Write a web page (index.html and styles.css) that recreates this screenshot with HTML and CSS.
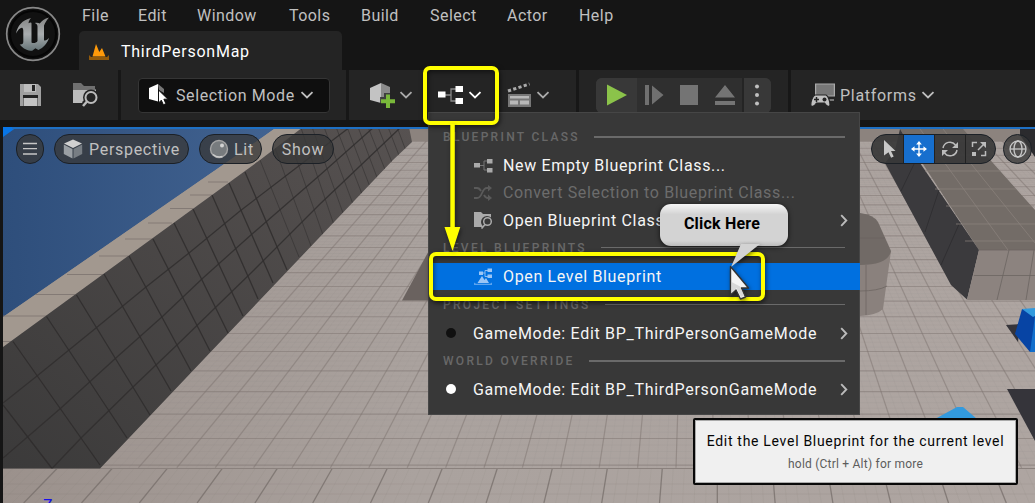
FILE: index.html
```html
<!DOCTYPE html>
<html lang="en">
<head>
<meta charset="utf-8">
<title>ThirdPersonMap</title>
<link rel="stylesheet" href="styles.css">
</head>
<body>
<div class="editor">
  <header class="header">
    <svg class="logo" width="56" height="56" viewBox="0 0 56 56">
      <defs><linearGradient id="metal" x1="0" y1="0" x2="0" y2="1"><stop offset="0" stop-color="#858585"/><stop offset=".5" stop-color="#a9adaf"/><stop offset="1" stop-color="#657477"/></linearGradient></defs>
      <circle cx="28" cy="28" r="26.3" fill="#111" stroke="#898989" stroke-width="1.7"/>
      <circle cx="28" cy="28" r="23" fill="none" stroke="#050505" stroke-width="2"/>
      <path fill="url(#metal)" d="M26 12C17 14 12.500 20 11 27.500c2-4 5-6.500 6.500-5.500 1 1 .8 3 .8 6v8c0 2-1.500 2.600-3.600 2.400 3.500 4.400 8 6.400 12.500 6.400l3.200-2.500 3 1.600c5-1.800 9.300-7 10.600-12.100-1.800 2.200-3.500 3.400-5 2.500V19.500c1.300-3.200 3-5.500 5-8-4.500 1-7.500 3.500-9.200 6-1.200-.9-3-1-5-.6 2 1 2.700 1.900 2.700 3.600v14.500c-1 2-4.500 2.700-6 1.500V17.500c0-1.500-1.500-1.200-3-.3.200-2 1-3.700 2.500-5.200z"/>
    </svg>
    <div class="header-main">
      <nav class="menubar"><span>File</span><span>Edit</span><span>Window</span><span>Tools</span><span>Build</span><span>Select</span><span>Actor</span><span>Help</span></nav>
      <div class="tab">
        <svg width="22" height="18" viewBox="0 0 22 18"><path fill="#ff9a0a" d="M4.500 13.500 8 1l3.300 8L14 5l3.500 8.500z"/><path fill="#925a0b" d="M1 12l2 2h16l2-2v5H1z"/></svg>
        <span>ThirdPersonMap</span>
      </div>
    </div>
  </header>

  <div class="toolbar">
    <div class="group group-files">
      <svg width="24" height="24" viewBox="0 0 24 24"><path fill="#a0a0a0" d="M1 1h18l3 3v19H1z"/><path fill="#bdbdbd" d="M5 1h12v8H5z"/><path fill="#242424" d="M13 2h3v6h-3zM4 12h15v11H4z"/><path fill="#c4c4c4" d="M4.500 15h14v8h-14z"/></svg>
      <svg width="27" height="26" viewBox="0 0 27 26"><path fill="#707070" d="M1 1h8l3 3h11v3H1z"/><path fill="#bcbcbc" d="M1 7.500h23V21H1z"/><circle cx="19" cy="15.500" r="8" fill="#242424"/><path fill="#242424" d="M10 20l4-3 5 5-6 4z"/><circle cx="19" cy="15.500" r="5.500" fill="#242424" stroke="#bcbcbc" stroke-width="2"/><path d="M15 19.500l-4 4.500" stroke="#bcbcbc" stroke-width="2.500"/></svg>
    </div>
    <div class="group group-mode">
      <div class="mode">
        <svg width="22" height="24" viewBox="0 0 22 24"><path fill="#fff" d="M1 5l9-4v17.500L1 16z"/><path fill="#777" d="M10 1l6 5v4l-5-3z"/><path fill="#fff" stroke="#0f0f0f" stroke-width="1" d="M10.500 7v13l2.800-2.800 2.100 4.600 2.500-1.100-2-4.500h4z"/></svg>
        <span>Selection Mode</span>
        <svg class="chev" width="14" height="8" viewBox="0 0 14 8"><path d="M1.500 1.200 7 6.500l5.500-5.300"/></svg>
      </div>
    </div>
    <div class="group group-create">
      <svg width="27" height="27" viewBox="0 0 27 27"><path fill="#c3c3c3" d="M1 6l11-5v20L1 18z"/><path fill="#8b8b8b" d="M12 1l9 4v13l-9 3z"/><path fill="#242424" d="M15 11h8v4h4v8h-4v4h-8v-4h-4v-8h4z" opacity=".75"/><path fill="#79b83a" d="M17 12.500h4v4.800h5v4h-5V26h-4v-4.700h-5v-4h5z"/></svg>
      <svg class="chev dim" width="14" height="8" viewBox="0 0 14 8"><path d="M1.500 1.200 7 6.500l5.500-5.300"/></svg>
      <svg class="bp" width="27" height="20" viewBox="0 0 27 20"><path fill="none" stroke="#888" stroke-width="1.300" d="M8 10h6M19 4h-5v12h5"/><path fill="#fff" d="M1 6.500h7.500v6H1zM18.500 1H26v6h-7.500zM18.500 13H26v6h-7.500z"/></svg>
      <svg class="chev on" width="14" height="8" viewBox="0 0 14 8"><path d="M1.500 1.200 7 6.500l5.500-5.300"/></svg>
      <svg class="clap" width="25" height="26" viewBox="0 0 25 26"><path fill="#777" d="M1 12h23v13H1z"/><path fill="#b8b8b8" d="M3 14h19v2.500H3zM3 18.500h8v4H3zM13 18.500h9v4h-9z"/><path stroke="#aaa" stroke-width="3" stroke-dasharray="3.200 2.300" d="M1 9 22.500 2"/></svg>
      <svg class="chev dim" width="14" height="8" viewBox="0 0 14 8"><path d="M1.500 1.200 7 6.500l5.500-5.300"/></svg>
    </div>
    <div class="group group-play">
      <div class="play">
        <span><svg width="22" height="24" viewBox="0 0 22 24"><path fill="#8bc34a" d="M1 1.500 21 12 1 22.500z"/></svg></span>
        <span><svg width="22" height="22" viewBox="0 0 22 22"><path fill="#707070" d="M2 1h4v20H2zM9 1.500 20.500 11 9 20.500z"/></svg></span>
        <span><svg width="18" height="20" viewBox="0 0 18 20"><path fill="#747474" d="M0 0h18v20H0z"/></svg></span>
        <span><svg width="22" height="20" viewBox="0 0 22 20"><path fill="#747474" d="M11 0l10 12.500H1zM1 16h20v4H1z"/></svg></span>
        <span class="dots"><svg width="6" height="24" viewBox="0 0 6 24"><g fill="#c0c0c0"><circle cx="3" cy="3.500" r="2"/><circle cx="3" cy="12" r="2"/><circle cx="3" cy="20.500" r="2"/></g></svg></span>
      </div>
    </div>
    <div class="group group-platforms">
      <svg width="26" height="26" viewBox="0 0 26 26"><path fill="#777" stroke="#aaa" stroke-width="1.200" d="M5.600 2h18.800v12H5.600z"/><path fill="#777" d="M18 17h6v2h-6z"/><path fill="#c0c0c0" stroke="#242424" stroke-width="1.200" d="M5 13h11c2.500 1 4 7 4 9.500 0 3-3 2.500-5.500-1.500h-8C4 25 .8 25.500.8 22.500c0-3 1.700-8.500 4.200-9.500z"/><path stroke="#242424" stroke-width="1.500" d="M4 17.500h5M6.500 15v5"/><circle cx="14.500" cy="17.500" r="2" fill="#242424"/></svg>
      <span>Platforms</span>
      <svg class="chev" width="14" height="8" viewBox="0 0 14 8"><path d="M1.500 1.200 7 6.500l5.500-5.300"/></svg>
    </div>
  </div>

  <main class="viewport">
    <svg class="scene" viewBox="3 127 1032 376" width="1032" height="376">
      <defs>
        <linearGradient id="sky" x1="0" x2="1"><stop offset="0" stop-color="#2e4e7b"/><stop offset="1" stop-color="#426391"/></linearGradient>
        <linearGradient id="ground" x1="0" x2="1"><stop offset="0" stop-color="#9b918c"/><stop offset=".4" stop-color="#aaa29e"/><stop offset="1" stop-color="#aea5a1"/></linearGradient>
        <linearGradient id="wall" x1="0" y1="1" x2="1" y2="0"><stop offset="0" stop-color="#3b3a3a"/><stop offset="1" stop-color="#575251"/></linearGradient>
        <clipPath id="far"><path d="M3 141h1032v327H3z"/></clipPath>
        <clipPath id="wallclip"><path d="M3 347 260 160 303 127H409l3 15L393 160 100 468.500H3z"/></clipPath>
      </defs>
      <path fill="url(#ground)" d="M3 127h1032v376H3z"/>
      <path fill="#8c837e" d="M400 127h635v14H400z"/>
      <g id="floor" clip-path="url(#far)" stroke="#7d7470" fill="none"></g>
      <g id="near" stroke="#756d69" fill="none"></g>
      <path stroke="#8a817d" d="M3 468.500h1032"/>
      <path fill="#6a625f" d="M402 300.500h30V245z"/>
      <path fill="url(#sky)" d="M3 127h274L230 160 3 317z"/>
      <path fill="#a2988f" d="M277 127h26L260 160 3 347v-30L230 160z"/>
      <path stroke="#7c736f" opacity=".8" d="M3 316h46M3 341.500h14M35 294.500h40M67 274.500h37M99 256h29M125 239h28M148 223h24M170 208.500h23M190 195h22M208 182h20"/>
      <g clip-path="url(#wallclip)">
        <path fill="url(#wall)" d="M3 127h410v342H3z"/>
        <path fill="none" stroke="#2d2b2b" stroke-width="1.300" opacity=".8" d="M3 405 52 468.500M13 341.500 100 465M46.500 316.500 127 438M76.500 295 150 415M104 274 171 391M129 256 191 371M153 239 210 351M174 223 228 333M193 209 243 316M212 195 258 299M229 183 273 283M245 172 287 270"/>
        <path fill="none" stroke="#2d2b2b" opacity=".5" d="M260 160 299 257M275 148 311 246M289 138 323 235M301 128 334 225M312 127 343 213M324 127 353 204M336 127 362 194M347 127 370 187M358 127 378 180M368 127 386 172M378 127 393 165M388 127 400 158M397 127 406 151"/>
        <path fill="none" stroke="#302e2e" stroke-width="1.300" opacity=".85" d="M3 403 37 376 96 328 146 287 189 253 240 211 300 165 350 127M3 458 61 408 117 357 163 316 203 278 252 234 320 175 374 127M52 468.500 82 437 133 387 178 344 217 306 252 272 320 204 400 128"/>
      </g>
      <path fill="#736c67" d="M900 129h63l30 34 42 47v40h-56z"/>
      <path fill="#3b3a3d" d="M900 129 920 163 979 250 967 299.500 951 285 885 163 895 150z"/>
      <path fill="#8c837f" d="M979 250h56v50h-68z"/>
      <path stroke="#6c6561" fill="none" opacity=".8" d="M979 250h56M974 275.500h61M1009 250l-12 50M1034 250l-8 50"/>
      <path stroke="#302f32" fill="none" d="M901 191l15-31M925 232l14-42M941 265l19-43"/>
      <path stroke="#8b837d" fill="none" opacity=".7" d="M920 129l88 121M943 129l92 114M907 141h68M918 155h68M925 171h75M935 189h81M946 206h88M956 224h79M965 241h70"/>
      <path fill="#2b2b2e" d="M1020 127h15v30l-15-22z"/>
      <path fill="#8a817d" d="M860 263l31-12-8 58q-6 6-23 7z"/>
      <path fill="#716a66" d="M860 213q14 2 18 9l13 29q-3 14-31 14z"/>
      <path stroke="#6a625e" fill="none" opacity=".7" d="M860 291q18 0 27-5M866 265v50M860 238h25"/>
      <path fill="#35343a" d="M1006 325l14-1-2 18zM1007 389h28v52z"/>
      <path fill="#0744a4" d="M1022 309l13 2v41h-5l-15-18z"/>
      <path fill="#329ade" d="M1022 309l13-1v8l-2 1z"/><path fill="#126fcc" d="M1035 316l-5 36h5z"/>
      <path fill="#329ade" d="M935 419l22-12h6l14 12z"/>
      <path fill="#0876e8" d="M3 127h14L3 137z"/><path fill="#1e70c4" d="M12 127h1023v2H12z"/>
      <text class="axis" x="43" y="511">Z</text>
    </svg>
    <div class="viewbar">
      <div class="pill round"><svg width="14" height="14" viewBox="0 0 14 14"><path stroke="#c6c6c6" stroke-width="1.300" d="M0 1.500h14M0 6.700h14M0 12h14"/></svg></div>
      <div class="pill persp"><svg width="20" height="20" viewBox="0 0 20 20"><path fill="#d0d0d0" d="M10 .5l9 4-9 4.500-9-4.500z"/><path fill="#9a9fa4" d="M.8 5.500l8.700 4.500v9.500L.8 15z"/><path fill="#777d83" d="M19.200 5.500 10.500 10v9.500L19.200 15z"/></svg><span>Perspective</span></div>
      <div class="pill lit"><svg width="20" height="20" viewBox="0 0 20 20"><circle cx="10" cy="10" r="8.500" fill="#777b7e" stroke="#a4a4a4" stroke-width="1.400"/><path d="M4 15.500Q8 19 13.500 17.500" fill="none" stroke="#ccc" stroke-width="1.600"/><circle cx="13" cy="6.500" r="2" fill="#d2d2d2"/></svg><span>Lit</span></div>
      <div class="pill show"><span>Show</span></div>
      <div class="pill tools">
        <span class="pick"><svg width="14" height="18" viewBox="0 0 14 18"><path fill="#c8c8c8" d="M1 0l11.500 11H8l2.700 5.500-2.600 1.200-2.600-5.500L1 15.500z"/></svg></span>
        <span class="active"><svg width="16" height="16" viewBox="0 0 18 18"><path stroke="#fff" stroke-width="1.500" d="M9 2v14M2 9h14"/><path fill="#fff" d="M9 0l3.200 4H5.800zM9 18l3.200-4H5.800zM0 9l4-3.200v6.400zM18 9l-4-3.200v6.400z"/></svg></span>
        <span><svg width="18" height="18" viewBox="0 0 18 18"><path fill="none" stroke="#bbb" stroke-width="1.500" d="M2 8a7 7 0 0 1 12.500-3M16 10A7 7 0 0 1 3.500 13"/><path fill="#bbb" d="M17 2v6h-6zM1 16v-6h6z"/></svg></span>
        <span class="scale"><svg width="16" height="16" viewBox="0 0 16 16"><path fill="none" stroke="#bbb" stroke-width="1.500" d="M1.500 6V1.500H6M14.500 10v4.500H10M7 9l6-6"/><path fill="#bbb" d="M9 1h6v6zM1 11h4v4H1z"/></svg></span>
      </div>
      <div class="pill round globe"><svg width="18" height="18" viewBox="0 0 18 18"><g fill="none" stroke="#c8c8c8" stroke-width="1.300"><circle cx="9" cy="9" r="8"/><ellipse cx="9" cy="9" rx="4" ry="8"/><path d="M1 9h16"/></g></svg></div>
    </div>
  </main>

  <section class="menu">
    <h2><span>BLUEPRINT CLASS</span></h2>
    <div class="item"><svg width="20" height="15" viewBox="0 0 20 15"><path fill="none" stroke="#777" d="M5 7.500h5M14 3h-4v9h4"/><path fill="#aaa" d="M0 5h6v4.500H0zM13 1h5.500v4.500H13zM13 10h5.500v4.500H13z"/></svg><span>New Empty Blueprint Class...</span></div>
    <div class="item off"><svg width="20" height="16" viewBox="0 0 20 16"><path fill="none" stroke="#5a5a5a" stroke-width="1.800" d="M0 3h3q2.500 0 4 3M10 10q1.500 3 4 3h2M0 13h3q3 0 5-5t5-5h3"/><path fill="#5a5a5a" d="M14 0l4 3-4 3.500zM14 9.500l4 3.500-4 3z"/></svg><span>Convert Selection to Blueprint Class...</span></div>
    <div class="item tall"><svg width="20" height="18" viewBox="0 0 20 18"><path fill="#aaa" d="M0 1h7l2 2h8v13H0z"/><circle cx="13" cy="11" r="6" fill="#383838"/><circle cx="13.500" cy="10.500" r="3.800" fill="none" stroke="#aaa" stroke-width="1.500"/><path d="M11 13.500l-3.500 4" stroke="#aaa" stroke-width="1.700"/></svg><span>Open Blueprint Class</span><svg class="sub" width="8" height="13" viewBox="0 0 8 13"><path d="M1.200 1.200 6.300 6.500 1.200 11.800"/></svg></div>
    <h2 class="second"><span>LEVEL BLUEPRINTS</span></h2>
    <div class="item selected"><svg width="20" height="18" viewBox="0 0 20 18"><path fill="none" stroke="#8abaf0" d="M8 5h3M14 2.500h-3v6h3"/><path fill="#9bc5f5" d="M5 3.500h4V7H5zM13.500.5H18V4h-4.500zM13.500 6.500H18V10h-4.500zM3.500 15 8 8l2.500 4 1.500-2 3 5z"/><path fill="#5ca3ee" d="M0 14.500l2 1.200h14l2-1.200V17H0z"/></svg><span>Open Level Blueprint</span></div>
    <h2 class="third"><span>PROJECT SETTINGS</span></h2>
    <div class="item mode-row tall"><i class="dot black"></i><span>GameMode: Edit BP_ThirdPersonGameMode</span><svg class="sub" width="8" height="13" viewBox="0 0 8 13"><path d="M1.200 1.200 6.300 6.500 1.200 11.800"/></svg></div>
    <h2><span>WORLD OVERRIDE</span></h2>
    <div class="item mode-row tall"><i class="dot"></i><span>GameMode: Edit BP_ThirdPersonGameMode</span><svg class="sub" width="8" height="13" viewBox="0 0 8 13"><path d="M1.200 1.200 6.300 6.500 1.200 11.800"/></svg></div>
  </section>

  <div class="mark mark-button"></div>
  <div class="mark mark-item"></div>
  <svg class="arrow" width="18" height="128" viewBox="0 0 18 128"><path fill="#ff0" d="M7.300 0h4.500v103h5.500L9.500 127l-8-24h5.800z"/></svg>
  <div class="callout">Click Here</div>
  <svg class="pointer" width="44" height="60" viewBox="720 244 44 60">
    <path fill="#d3d3d3" d="M741 244h19l-29 23z"/>
    <path fill="#f4f4f4" stroke="#333" stroke-width="1.400" stroke-linejoin="round" d="M730.500 266.500v28.500l5.500-5 4.500 9 5-2-4-9h7z"/>
    <path fill="#bbb" d="M731.500 282v11l5-5 4.500 9 3-1.200-4-9.300z" opacity=".5"/>
  </svg>
  <aside class="tip"><strong>Edit the Level Blueprint for the current level</strong><small>hold (Ctrl + Alt) for more</small></aside>
</div>
<script src="scene.js"></script>
</body>
</html>
```
FILE: styles.css
```css
* { box-sizing: border-box; }
body { margin: 0; background: #151515; font-family: Roboto, "Liberation Sans", sans-serif; font-size: 16px; color: #c0c0c0; }
svg { display: block; flex: none; }
.editor { position: relative; width: 1035px; height: 503px; overflow: hidden; display: flex; flex-direction: column; }
.header { display: flex; height: 70px; flex: none; }
.logo { margin: 6px 18px 0 5px; }
.header-main { display: flex; flex-direction: column; width: 600px; }
.menubar { display: grid; grid-template-columns: 56px 59px 92px 72px 69px 77px 72px 60px; height: 31px; padding-left: 3px; align-items: center; letter-spacing: .45px; }
.tab { display: flex; align-items: center; gap: 11px; width: 263px; height: 39px; padding: 2px 0 0 9px; background: #242424; border-radius: 5px 5px 0 0; color: #fff; letter-spacing: .75px; }
.toolbar { display: flex; height: 50px; flex: none; background: #242424; }
.group { display: flex; align-items: center; height: 50px; flex: none; }
.group + .group { border-left: 3px solid #171717; }
.group-files { width: 118px; padding-left: 19px; gap: 29px; }
.group-mode { width: 228px; padding-left: 17px; }
.mode { display: flex; align-items: center; width: 192px; height: 35px; border: 1px solid #353535; border-radius: 4px; background: #0f0f0f; padding-left: 9px; letter-spacing: .6px; }
.mode span { margin: 0 5px 0 6px; }
.chev path { fill: none; stroke: #c0c0c0; stroke-width: 1.8; }
.chev.dim path { stroke: #aaa; }
.chev.on path { stroke: #fff; }
.group-create { width: 230px; padding-left: 20px; }
.group-create .chev { margin-left: 3px; }
.group-create .bp { margin-left: 24px; }
.group-create .bp + .chev { margin-left: 4px; }
.group-create .clap { margin-left: 25px; }
.group-create .clap + .chev { margin-left: 4px; }
.group-play { width: 212px; padding-left: 17px; }
.play { display: grid; grid-template-columns: 41px 34px 36px 35px 29px; height: 35px; background: #383838; border-radius: 6px; overflow: hidden; }
.play span { display: flex; align-items: center; justify-content: center; background: #2f2f2f; }
.play span:first-child, .play .dots { background: #383838; }
.play .dots { border-left: 2px solid #242424; padding-right: 2px; }
.group-platforms { padding-left: 19px; letter-spacing: .7px; }
.group-platforms span { margin: 0 4px; }
.viewport { position: relative; margin: 7px 0 0 3px; width: 1032px; height: 376px; }
.scene { position: absolute; left: 0; top: 0; }
.axis { font-size: 16px; fill: #160eea; }
.viewbar { position: relative; display: flex; padding: 7px 0 0 13px; }
.pill { display: flex; align-items: center; height: 30px; border: 1px solid #1b2026; border-radius: 15px; background: rgba(56,56,56,.78); letter-spacing: .7px; }
.round { width: 28px; justify-content: center; }
.persp { width: 135px; margin-left: 10px; padding-left: 8px; gap: 6px; }
.lit { width: 63px; margin-left: 10px; padding-left: 9px; gap: 5px; }
.show { width: 62px; margin-left: 10px; justify-content: center; }
.tools { width: 125px; margin-left: 537px; overflow: hidden; background: rgba(56,56,56,.92); }
.tools span { display: flex; flex: none; width: 31px; height: 28px; justify-content: center; align-items: center; border-left: 1px solid #222; }
.tools .pick { border: 0; padding-left: 5px; }
.tools .active { background: #176fce; }
.tools .scale { padding-right: 4px; }
.globe { margin-left: 7px; width: 29px; }
.menu { position: absolute; left: 428px; top: 112px; width: 432px; height: 303px; padding-top: 10px; border: 1px solid #464646; background: #383838; }
.menu h2 { display: flex; align-items: center; gap: 14px; height: 28px; margin: 0; padding: 0 14px; color: #686868; font-size: 12px; font-weight: 500; letter-spacing: 2.3px; }
.menu h2::after { content: ""; height: 1.5px; flex: 1; background: #6a6a6a; }
.menu .second { height: 29px; padding-bottom: 2px; }
.menu .third { height: 29px; }
.item { display: flex; align-items: center; height: 27px; padding: 0 11px 0 45px; gap: 9px; color: #f5f5f5; letter-spacing: .65px; }
.menu h2:first-child + .item, .tall { height: 28px; }
.off { color: #6c6c6c; }
.selected { background: #0070e0; margin-right: -1px; }
.sub { margin-left: auto; }
.sub path { fill: none; stroke: #bbb; stroke-width: 1.9; }
.mode-row { padding-left: 17px; gap: 17px; letter-spacing: .7px; }
.dot { width: 10px; height: 10px; border-radius: 50%; background: #fff; }
.dot.black { background: #101010; }
.mark { position: absolute; border: 4px solid #ff0; border-radius: 7px; box-shadow: 1px 2px 5px rgba(0,0,0,.6), inset 1px 2px 5px rgba(0,0,0,.5); }
.mark-button { left: 423px; top: 66px; width: 76px; height: 59px; }
.mark-item { left: 429px; top: 252px; width: 336px; height: 49px; }
.arrow { position: absolute; left: 443px; top: 124px; filter: drop-shadow(1px 2px 2px rgba(0,0,0,.5)); }
.callout { position: absolute; left: 660px; top: 204px; width: 128px; height: 42px; border-radius: 11px; background: linear-gradient(#f5f5f5, #d3d3d3 25%, #d3d3d3 88%, #bbb); box-shadow: 0 1px 5px rgba(0,0,0,.7); color: #000; font-weight: 700; letter-spacing: .2px; text-align: center; line-height: 39px; padding-right: 4px; }
.pointer { position: absolute; left: 720px; top: 244px; filter: drop-shadow(1px 2px 2px rgba(0,0,0,.5)); }
.tip { position: absolute; left: 693px; top: 418px; width: 325px; height: 67px; display: flex; flex-direction: column; align-items: center; padding-top: 11px; border: 2px solid #080808; border-radius: 2px; background: #f0f0f0; box-shadow: inset 0 0 0 1px #aaa; }
.tip strong { font-size: 14px; font-weight: 400; color: #050505; line-height: 20px; letter-spacing: .7px; }
.tip small { font-size: 12px; color: #5c5c5c; line-height: 26px; letter-spacing: .22px; }
```
FILE: scene.js
```js
// Perspective floor grid: columns converge on one vanishing point, rows shrink with distance.
const NS = 'http://www.w3.org/2000/svg';
function line(parent, x1, y1, x2, y2, width, opacity) {
  const el = document.createElementNS(NS, 'path');
  el.setAttribute('d', `M${x1} ${y1}L${x2} ${y2}`);
  el.setAttribute('stroke-width', width);
  el.setAttribute('stroke-opacity', opacity);
  document.getElementById(parent).appendChild(el);
}
for (let i = -100; i <= 80; i++) {
  const major = i % 4 === 0;
  line('floor', 676 + 9.6 * i, 467.7, 696, -165, major ? 1.2 : 0.7, major ? 0.5 : 0.08);
}
for (let i = 0; i <= 96; i++) {
  const y = -165 + 1 / (0.001587 + 0.0000698 * i / 4);
  const major = i % 4 === 0;
  line('floor', 3, y, 1035, y, major ? 1.1 : 0.6, major ? 0.5 : 0.1);
}
for (let i = -45; i <= 60; i++) {
  const k = i / 5;
  const major = i % 5 === 0;
  line('near', 442.3 + 55 * k, 468.3, 428.3 + 57.8 * k, 503, major ? 1.3 : 0.6, major ? 0.75 : 0.12);
}
line('near', 3, 484, 1035, 484, 0.6, 0.2);
line('near', 3, 494, 1035, 494, 0.6, 0.2);
```
